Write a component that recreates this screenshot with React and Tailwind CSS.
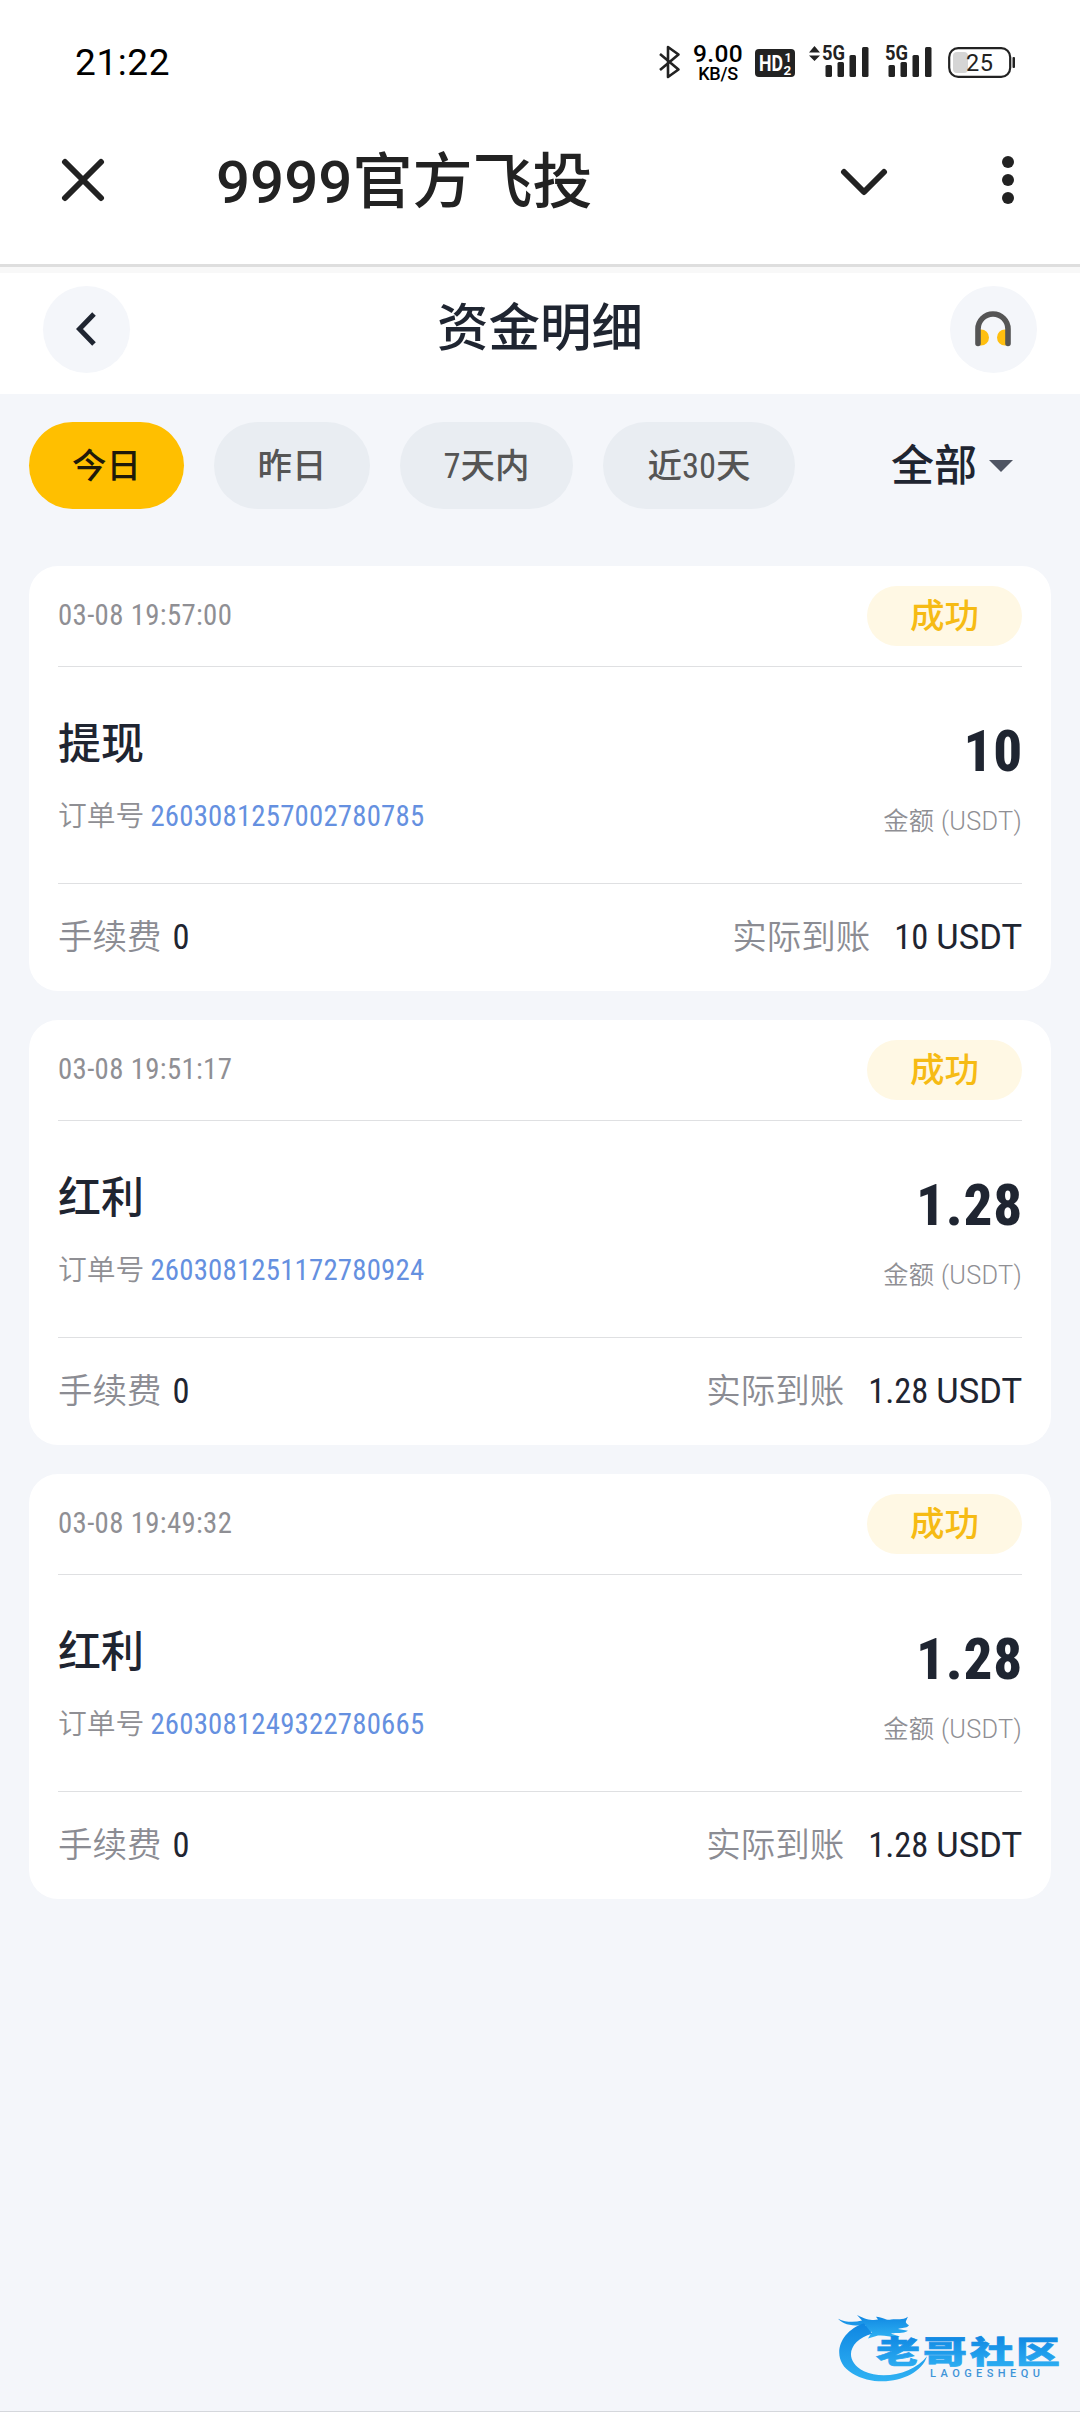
import React from "react";

const records = [
  { id: "2603081257002780785", time: "03-08 19:57:00", type: "提现", amount: "10", fee: "0" },
  { id: "2603081251172780924", time: "03-08 19:51:17", type: "红利", amount: "1.28", fee: "0" },
  { id: "2603081249322780665", time: "03-08 19:49:32", type: "红利", amount: "1.28", fee: "0" },
];

const tabs = [
  { name: "今日", width: "w-[155px]" },
  { name: "昨日", width: "w-[156px]" },
  { name: "7天内", width: "w-[173px]" },
  { name: "近30天", width: "w-[192px]" },
];

function Signal({ arrows }) {
  return (
    <svg width="62" height="44" viewBox="0 -10 62 44" fill="#222">
      {arrows && <path d="M0 9.5L5.5 3L11 9.5ZM0 12.5L5.5 18L11 12.5Z" />}
      <text x="13" y="17" fontSize="21" fontWeight="700" textLength="23" lengthAdjust="spacingAndGlyphs">5G</text>
      <rect x="16.5" y="22" width="6.5" height="12" rx="1.5" />
      <rect x="28.5" y="19" width="6.5" height="15" rx="1.5" />
      <rect x="40.5" y="12" width="6.5" height="22" rx="1.5" />
      <rect x="53" y="4" width="6.5" height="30" rx="1.5" />
    </svg>
  );
}

function StatusBar() {
  return (
    <div className="h-[125px] flex justify-between pl-[75px] pr-[64px] text-black">
      <span className="mt-[42px] h-[42px] leading-[42px] text-[37px] font-[450] tracking-[0.6px]">21:22</span>
      <div className="mt-[44px] flex h-[38px]">
        <svg className="mt-[1px]" width="22" height="34" viewBox="0 0 22 34" fill="none" stroke="#222" strokeWidth="2.6" strokeLinejoin="round">
          <path d="M1 9L19.5 24.5L9 32V2L19.5 9.5L1 25" />
        </svg>
        <div className="ml-[12px] w-[50px] flex flex-col items-center font-medium">
          <span className="h-[20px] leading-[20px] text-[24.5px] tracking-[0.4px]">9.00</span>
          <span className="h-[18px] leading-[20px] text-[18px] tracking-[-0.3px]">KB/S</span>
        </div>
        <svg className="ml-[12px] mt-[5px]" width="40" height="28" viewBox="0 0 40 28">
          <rect width="40" height="28" rx="4" fill="#222" />
          <text x="4" y="22" fontSize="22" fontWeight="700" fill="#fff" textLength="24" lengthAdjust="spacingAndGlyphs">HD</text>
          <text x="29.5" y="13" fontSize="12.5" fontWeight="700" fill="#fff">1</text>
          <text x="28.5" y="25.5" fontSize="13.5" fontWeight="700" fill="#fff">2</text>
        </svg>
        <div className="ml-[14px] -mt-[11px]"><Signal arrows /></div>
        <div className="ml-[1px] -mt-[11px]"><Signal /></div>
        <svg className="ml-[14px] mt-[3px]" width="68" height="31" viewBox="0 0 68 31">
          <rect x="5" y="5" width="15" height="21" rx="4" fill="#d5d5d5" />
          <rect x="1.2" y="1.2" width="61" height="28.6" rx="9" fill="none" stroke="#222" strokeWidth="2.2" />
          <rect x="64.5" y="10" width="2.5" height="11" rx="1" fill="#222" />
          <text x="18" y="23.5" fontSize="23.5" fill="#222" textLength="27">25</text>
        </svg>
      </div>
    </div>
  );
}

function BrowserBar() {
  return (
    <div className="h-[139px] flex pl-[61px] pr-[66px] text-[#222]">
      <svg className="mt-[33px]" width="44" height="44" viewBox="0 0 44 44" stroke="currentColor" strokeWidth="6" strokeLinecap="round">
        <path d="M4 4L40 40M40 4L4 40" />
      </svg>
      <h1 className="ml-[111px] mt-[18px] h-[80px] leading-[80px] text-[60px] font-medium whitespace-nowrap">9999官方飞投</h1>
      <svg className="ml-auto mt-[43px]" width="48" height="30" viewBox="0 0 48 30" fill="none" stroke="currentColor" strokeWidth="6" strokeLinecap="round" strokeLinejoin="round">
        <path d="M4 4L24 24L44 4" />
      </svg>
      <svg className="ml-[114px] mt-[31px]" width="12" height="48" viewBox="0 0 12 48" fill="currentColor">
        <circle cx="6" cy="6" r="6" />
        <circle cx="6" cy="24" r="6" />
        <circle cx="6" cy="42" r="6" />
      </svg>
    </div>
  );
}

function PageHeader() {
  return (
    <div className="h-[130px] border-t-[3px] border-[#dedede] bg-white">
      <div className="h-[6px] bg-[#f8f8f8]" />
      <div className="h-[112px] flex items-center justify-between px-[43px]">
        <button className="size-[87px] rounded-full bg-[#f4f6fa] flex items-center justify-center">
          <svg width="22" height="34" viewBox="0 0 22 34" fill="none" stroke="#1f2531" strokeWidth="5">
            <path d="M18 2L3.5 17L18 32" />
          </svg>
        </button>
        <h2 className="text-[51.5px] font-medium text-[#1f2531] leading-[60px]">资金明细</h2>
        <button className="size-[87px] rounded-full bg-[#f4f6fa] flex items-center justify-center">
          <svg width="36" height="36" viewBox="0 0 36 36" fill="none">
            <path d="M5 18.5H6A8 8 0 0 1 6 34.5H5ZM31 18.5H30A8 8 0 0 0 30 34.5H31Z" fill="#ffbf0f" />
            <path d="M3 32.5V18A15 15 0 0 1 33 18V32.5" stroke="#555" strokeWidth="5.6" strokeLinecap="round" />
          </svg>
        </button>
      </div>
    </div>
  );
}

function Filters() {
  return (
    <div className="flex items-center pl-[29px] pt-[28px] h-[115px]">
      <div className="flex gap-[30px]">
        {tabs.map((tab, i) => (
          <button
            key={tab.name}
            className={`h-[87px] pt-[2px] rounded-full text-[34.5px] font-[450] font-stretch-[87%] ${tab.width} ${
              i === 0 ? "bg-[#ffbf00] text-[#1f1a0a]" : "bg-[#e9edf2] text-[#555]"
            }`}
          >
            {tab.name}
          </button>
        ))}
      </div>
      <button className="ml-[96px] flex items-center text-[43px] font-medium text-[#1f2531]">
        <span className="pt-[1px]">全部</span>
        <svg className="ml-[12px]" width="24" height="12" viewBox="0 0 24 12" fill="#4f5563">
          <path d="M0 0H24L12 12Z" />
        </svg>
      </button>
    </div>
  );
}

function RecordCard({ record }) {
  return (
    <div className="h-[425px] rounded-[29px] bg-white px-[29px] text-[#1f2531]">
      <div className="h-[101px] flex items-center justify-between border-b border-[#dfe0e2]">
        <span className="text-[28.8px] text-[#8f8f94] font-stretch-[87%] tracking-[0.35px]">{record.time}</span>
        <span className="h-[60px] w-[155px] rounded-full bg-[#fff8e4] text-center leading-[61px] text-[34.5px] font-medium text-[#f6bb14]">成功</span>
      </div>
      <div className="h-[217px] flex justify-between border-b border-[#dfe0e2]">
        <div className="pt-[51px]">
          <p className="h-[52px] leading-[52px] text-[43px] font-medium">{record.type}</p>
          <p className="mt-[26px] h-[40px] leading-[40px] text-[28.8px] text-[#8f8f94] whitespace-nowrap">
            <span className="font-[330]">订单号</span>
            <span className="ml-[6px] text-[#6590e0] font-stretch-[87%] tracking-[0.2px]">{record.id}</span>
          </p>
        </div>
        <div className="pt-[51px] text-right">
          <p className="-mr-[1px] h-[68px] leading-[68px] text-[57px] font-extrabold font-stretch-[87%] tracking-[0.8px]">{record.amount}</p>
          <p className="mt-[16px] h-[40px] leading-[40px] text-[25.3px] font-[330] text-[#8f8f94] tracking-[0.3px]">金额 (USDT)</p>
        </div>
      </div>
      <div className="h-[107px] flex items-center justify-between pt-[1px] text-[34.5px]">
        <p>
          <span className="text-[#8b8c93] font-[330]">手续费</span>
          <span className="ml-[11px] font-stretch-[87%]">{record.fee}</span>
        </p>
        <p>
          <span className="text-[#8b8c93] font-[330]">实际到账</span>
          <span className="ml-[24px] font-stretch-[87%]">{record.amount}</span>
          <span className="ml-[8px]">USDT</span>
        </p>
      </div>
    </div>
  );
}

function CommunityLogo() {
  return (
    <svg className="absolute right-[14px] bottom-[24px]" width="230" height="80" viewBox="0 0 230 80">
      <defs>
        <linearGradient id="blue" x1="0" y1="0" x2="0" y2="1">
          <stop offset="0" stopColor="#0f86e2" />
          <stop offset="1" stopColor="#2fb2f3" />
        </linearGradient>
      </defs>
      <g fill="url(#blue)">
        <g transform="translate(0 6) scale(1 .94)">
          {/* dragon head and whiskers */}
          <path d="M2 6C10 10 18 10 26 8L21 2C30 7 36 8 42 7L40 4C48 5 50 8 55 7C62 6 66 8 72 4C70 9 68 10 73 13C70 17 66 15 62 17L72 19C67 23 60 20 55 22L64 25C56 27 50 23 42 24L32 27L36 20C28 22 26 18 30 13C18 14 8 13 2 6Z" />
          {/* body ring */}
          <path d="M28 11C2 20 -6 50 16 64C44 82 84 70 91 46C78 64 48 72 28 62C6 50 14 28 36 22Z" />
        </g>
        <g fontSize="44" fontWeight="900" stroke="url(#blue)" strokeWidth="1" transform="translate(0 56) scale(1 .7)">
          <text x="40" y="0">老</text>
          <text x="87" y="0">哥</text>
          <text x="134" y="0">社</text>
          <text x="180" y="0">区</text>
        </g>
      </g>
      <text x="94" y="69.5" fontSize="11" fontWeight="500" fill="#3f94d8" textLength="110">LAOGESHEQU</text>
    </svg>
  );
}

export default function App() {
  return (
    <div className="relative h-[2412px] w-[1080px] overflow-hidden border-b border-[#d5d7dc] bg-[#f4f6fa] font-[Roboto,'Noto_Sans_CJK_SC',sans-serif]">
      <div className="bg-white">
        <StatusBar />
        <BrowserBar />
        <PageHeader />
      </div>
      <Filters />
      <div className="mt-[57px] flex flex-col gap-[29px] px-[29px]">
        {records.map((record) => (
          <RecordCard key={record.id} record={record} />
        ))}
      </div>
      <CommunityLogo />
    </div>
  );
}
